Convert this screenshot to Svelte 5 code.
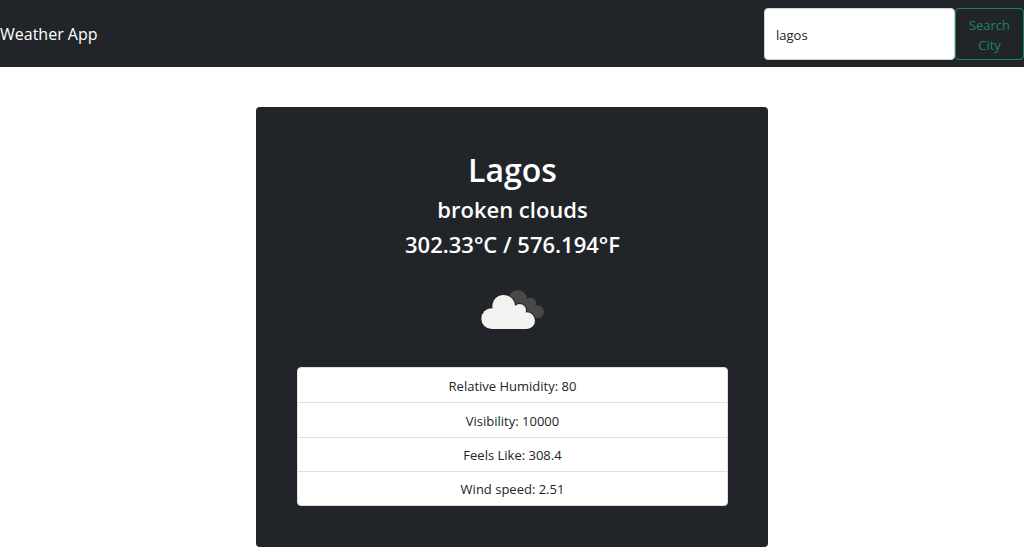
<script>
  let query = $state('lagos');

  const weather = {
    city: 'Lagos',
    description: 'broken clouds',
    celsius: '302.33',
    fahrenheit: '576.194'
  };

  const details = [
    { label: 'Relative Humidity', value: '80' },
    { label: 'Visibility', value: '10000' },
    { label: 'Feels Like', value: '308.4' },
    { label: 'Wind speed', value: '2.51' }
  ];

  const puffs = [
    { x: 65, y: 116, r: 31 },
    { x: 101, y: 79, r: 34 },
    { x: 149, y: 91, r: 19 },
    { x: 170, y: 122, r: 25 }
  ];
</script>

<nav class="navbar">
  <a class="brand" href="#home">Weather App</a>
  <form class="search" onsubmit={(event) => event.preventDefault()}>
    <input type="text" aria-label="City" bind:value={query} />
    <button type="submit">Search City</button>
  </form>
</nav>

<main class="card">
  <h1>{weather.city}</h1>
  <h2>{weather.description}</h2>
  <h2>{weather.celsius}°C / {weather.fahrenheit}°F</h2>
  <svg class="icon" viewBox="3 0 252 180" aria-hidden="true">
    <g fill="#484848">
      <circle cx="143" cy="58" r="28" />
      <circle cx="182" cy="69" r="16" />
      <circle cx="203" cy="95" r="19" />
      <path d="M143 58H186L203 95V114H150Z" />
    </g>
    <g fill="#212529">
      {#each puffs as puff}
        <circle cx={puff.x} cy={puff.y} r={puff.r + 3} />
      {/each}
    </g>
    <g fill="#f2f2f0">
      {#each puffs as puff}
        <circle cx={puff.x} cy={puff.y} r={puff.r} />
      {/each}
      <path d="M65 147V110L101 80L149 90L170 115V147Z" />
    </g>
  </svg>
  <ul class="details">
    {#each details as item}
      <li>{item.label}: {item.value}</li>
    {/each}
  </ul>
</main>

<style>
  :global(body) {
    margin: 0;
    background: #fff;
    color: #212529;
    font-family: 'Segoe UI', 'Open Sans', 'Noto Sans', sans-serif;
    font-size: 13px;
    line-height: 20px;
  }

  .navbar {
    display: flex;
    align-items: center;
    justify-content: space-between;
    padding: 8px 0 7px;
    background: #212529;
  }

  .brand {
    color: #fff;
    font-size: 16px;
    line-height: 24px;
    text-decoration: none;
  }

  .search {
    display: flex;
    width: 260px;
  }

  input,
  button {
    box-sizing: border-box;
    border-radius: 4px;
    font: inherit;
  }

  input {
    flex: 1;
    min-width: 0;
    padding: 6px 11px 4px;
    border: 1px solid #ced4da;
    background: #fff;
    color: #212529;
  }

  button {
    width: 69px;
    padding: 6px 11px 4px;
    border: 1px solid #198754;
    background: transparent;
    color: #198754;
  }

  .card {
    box-sizing: border-box;
    width: 50%;
    margin: 40px auto 0;
    padding: 41px 40px 41px 41px;
    border-radius: 4px;
    background: #212529;
    color: #fff;
    text-align: center;
  }

  h1,
  h2 {
    margin: 0;
    font-weight: 600;
  }

  h1 {
    font-size: 32px;
    line-height: 44px;
  }

  h2 {
    font-size: 22px;
    line-height: 35px;
  }

  .icon {
    display: block;
    width: 84px;
    height: 60px;
    margin: 18px auto 27px;
  }

  .details {
    display: grid;
    grid-auto-rows: 1fr;
    box-sizing: border-box;
    min-height: 139px;
    margin: 0;
    padding: 0;
    overflow: hidden;
    border: 1px solid #dfdfdf;
    border-radius: 4px;
    background: #fff;
    color: #212529;
    list-style: none;
  }

  li {
    display: flex;
    align-items: center;
    justify-content: center;
    padding-top: 2px;
  }

  li + li {
    border-top: 1px solid #dfdfdf;
  }
</style>
